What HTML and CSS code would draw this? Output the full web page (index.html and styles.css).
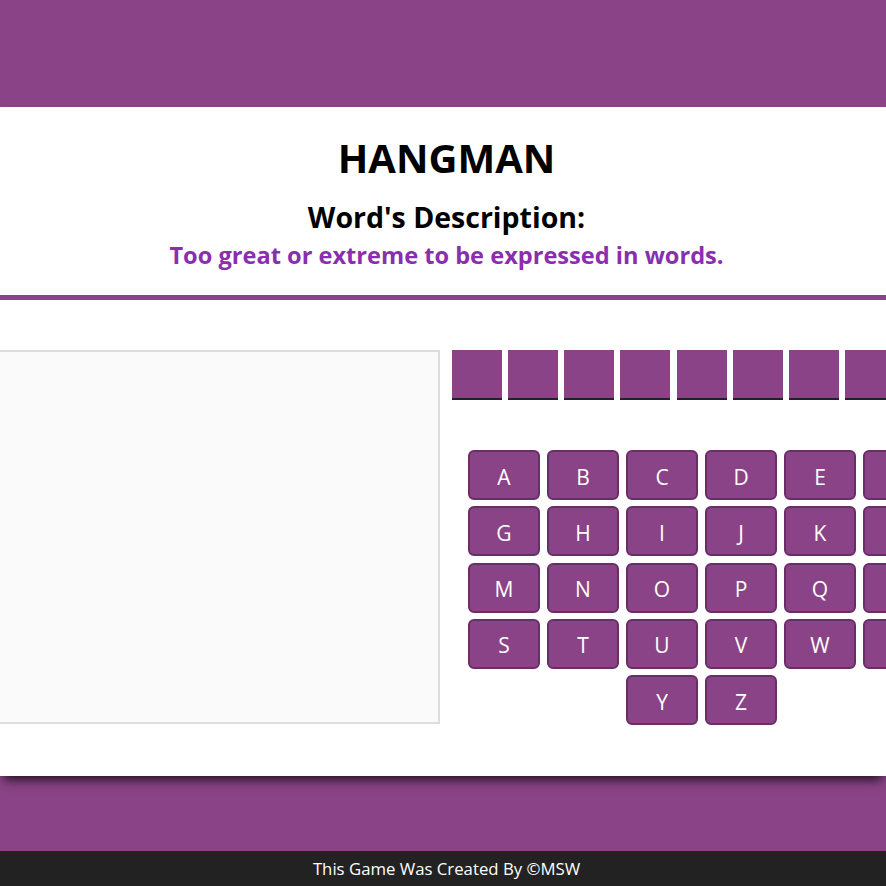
FILE: index.html
```html
<!DOCTYPE html>
<html lang="en">
<head>
<meta charset="utf-8">
<title>Hangman</title>
<link rel="stylesheet" href="styles.css">
</head>
<body>
  <header class="top-bar"></header>
  <main class="card">
    <section class="intro">
      <h1 class="title">HANGMAN</h1>
      <h2 class="subtitle">Word's Description:</h2>
      <p class="hint">Too great or extreme to be expressed in words.</p>
    </section>
    <section class="game">
      <div class="gallows"></div>
      <div class="panel">
        <div class="word">
          <span class="slot"></span><span class="slot"></span><span class="slot"></span>
          <span class="slot"></span><span class="slot"></span><span class="slot"></span>
          <span class="slot"></span><span class="slot"></span><span class="slot"></span>
        </div>
        <div class="keyboard">
          <button class="key">A</button><button class="key">B</button><button class="key">C</button>
          <button class="key">D</button><button class="key">E</button><button class="key">F</button>
          <button class="key">G</button><button class="key">H</button><button class="key">I</button>
          <button class="key">J</button><button class="key">K</button><button class="key">L</button>
          <button class="key">M</button><button class="key">N</button><button class="key">O</button>
          <button class="key">P</button><button class="key">Q</button><button class="key">R</button>
          <button class="key">S</button><button class="key">T</button><button class="key">U</button>
          <button class="key">V</button><button class="key">W</button><button class="key">X</button>
          <button class="key">Y</button><button class="key">Z</button>
        </div>
      </div>
    </section>
  </main>
  <div class="footer-band"></div>
  <footer class="credits">This Game Was Created By &copy;MSW</footer>
</body>
</html>
```
FILE: styles.css
```css
* { box-sizing: border-box; }

html, body {
  margin: 0;
  padding: 0;
  overflow-x: hidden;
}

body {
  font-family: "Open Sans", "Noto Sans", "DejaVu Sans", sans-serif;
  background: #ffffff;
  color: #000;
}

.top-bar {
  height: 107px;
  background: #8a4386;
}

.card {
  position: relative;
  z-index: 1;
  background: #ffffff;
  box-shadow: 0 8px 10px -4px rgba(0, 0, 0, 0.75);
  overflow: hidden;
}

.intro {
  padding: 27px 0 25px 7px;
  text-align: center;
  border-bottom: 5px solid #8a4386;
}

.title {
  margin: 0;
  font-size: 40px;
  line-height: 48px;
  font-weight: 700;
}

.subtitle {
  margin: 18px 0 0;
  font-size: 28.5px;
  line-height: 34px;
  font-weight: 700;
}

.hint {
  margin: 6px 0 0;
  font-size: 23.6px;
  line-height: 30px;
  font-weight: 700;
  color: #8a2eb0;
}

.game {
  display: flex;
  justify-content: center;
  gap: 12px;
  padding: 50px 0 51px 5px;
}

.gallows {
  flex: 0 0 500px;
  height: 374px;
  background: #fafafa;
  border: 2px solid #dddddd;
}

.panel {
  flex: 0 0 500px;
  display: flex;
  flex-direction: column;
}

.word {
  display: flex;
  justify-content: space-between;
}

.slot {
  width: 50px;
  height: 50px;
  background: #8a4386;
  border-bottom: 2px solid #222222;
}

.keyboard {
  margin-top: 50px;
  padding: 0 16px;
  display: flex;
  flex-wrap: wrap;
  justify-content: center;
  column-gap: 7px;
  row-gap: 6.25px;
}

.key {
  width: 72px;
  height: 50px;
  padding: 3px 0 0;
  background: #8a4386;
  color: #ffffff;
  border: 2px solid #6b2d67;
  border-radius: 6px;
  font-family: "Open Sans", "Noto Sans", sans-serif;
  font-size: 21px;
}

.footer-band {
  height: 75px;
  background: #8a4386;
}

.credits {
  height: 36px;
  background: #222222;
  color: #ffffff;
  text-align: center;
  font-size: 16.75px;
  line-height: 36px;
  padding-left: 7px;
}
```
